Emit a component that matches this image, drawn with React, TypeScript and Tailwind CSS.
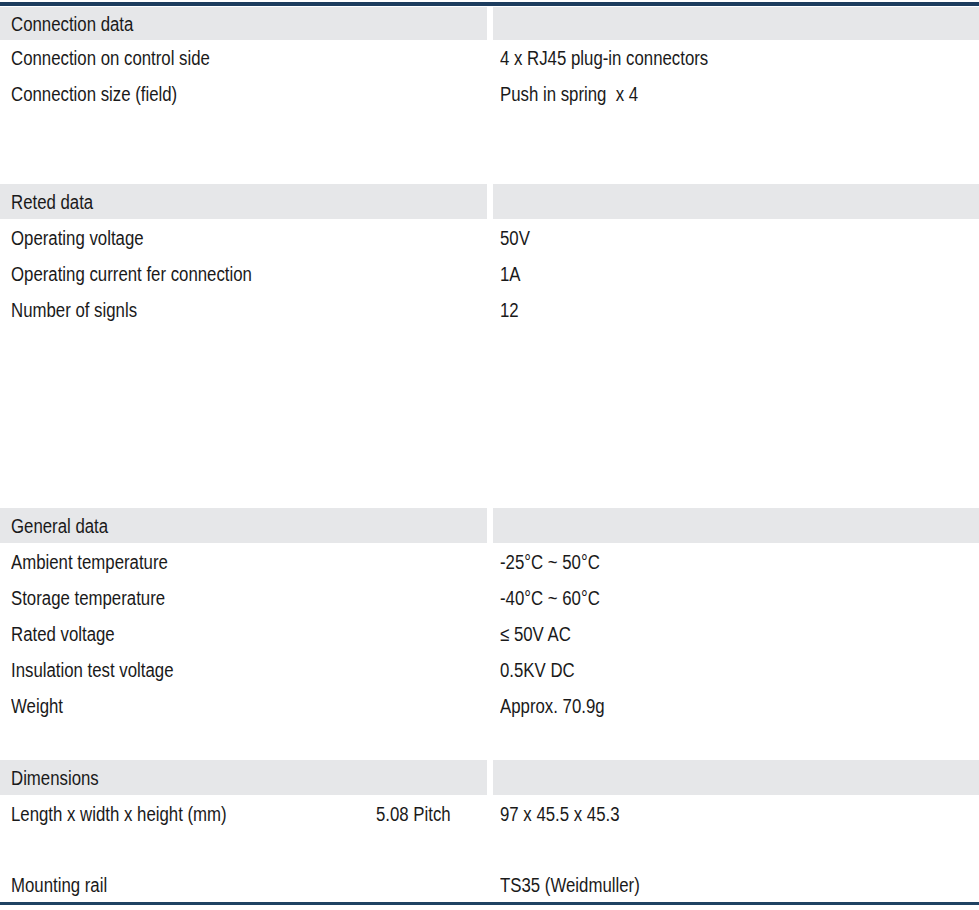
import React from "react";

type Row =
  | { kind: "header"; label: string; first?: boolean }
  | { kind: "data"; label: string; value: string; sub?: string; last?: boolean }
  | { kind: "empty" };

const rows: Row[] = [
  { kind: "header", label: "Connection data", first: true },
  { kind: "data", label: "Connection on control side", value: "4 x RJ45 plug-in connectors" },
  { kind: "data", label: "Connection size (field)", value: "Push in spring  x 4" },
  { kind: "empty" },
  { kind: "empty" },
  { kind: "header", label: "Reted data" },
  { kind: "data", label: "Operating voltage", value: "50V" },
  { kind: "data", label: "Operating current fer connection", value: "1A" },
  { kind: "data", label: "Number of signls", value: "12" },
  { kind: "empty" },
  { kind: "empty" },
  { kind: "empty" },
  { kind: "empty" },
  { kind: "empty" },
  { kind: "header", label: "General data" },
  { kind: "data", label: "Ambient temperature", value: "-25°C ~ 50°C" },
  { kind: "data", label: "Storage temperature", value: "-40°C ~ 60°C" },
  { kind: "data", label: "Rated voltage", value: "≤ 50V AC" },
  { kind: "data", label: "Insulation test voltage", value: "0.5KV DC" },
  { kind: "data", label: "Weight", value: "Approx. 70.9g" },
  { kind: "empty" },
  { kind: "header", label: "Dimensions" },
  { kind: "data", label: "Length x width x height (mm)", sub: "5.08 Pitch", value: "97 x 45.5 x 45.3" },
  { kind: "empty" },
  { kind: "data", label: "Mounting rail", value: "TS35 (Weidmuller)", last: true },
];

// condensed look: Arial-width font squeezed horizontally
function Txt({ children }: { children: React.ReactNode }) {
  return <span className="inline-block whitespace-pre origin-left scale-x-[0.84]">{children}</span>;
}

function SpecRow({ row }: { row: Row }) {
  if (row.kind === "empty") return <div className="h-9" />;

  if (row.kind === "header") {
    return (
      <div className={`flex ${row.first ? "h-[34px] pt-px" : "h-9 pb-px"}`}>
        <div className="w-[487px] bg-[#e6e7e9] pl-[11px] flex items-center">
          <Txt>{row.label}</Txt>
        </div>
        <div className="w-[6px] bg-white" />
        <div className="flex-1 bg-[#e6e7e9]" />
      </div>
    );
  }

  return (
    <div className={`flex items-center ${row.last ? "h-[34px]" : "h-9"}`}>
      <div className="w-[487px] flex items-center">
        <div className="w-[366px] pl-[11px]">
          <Txt>{row.label}</Txt>
        </div>
        {row.sub && (
          <div className="pl-[10px]">
            <Txt>{row.sub}</Txt>
          </div>
        )}
      </div>
      <div className="w-[6px]" />
      <div className="flex-1 pl-[7px]">
        <Txt>{row.value}</Txt>
      </div>
    </div>
  );
}

export default function App() {
  return (
    <div
      className="w-[979px] h-[910px] bg-white pt-[2px] text-[20px] leading-[24px] text-[#1a1a1a] overflow-hidden"
      style={{ fontFamily: '"Liberation Sans", Arial, sans-serif' }}
    >
      <div className="h-[4px] bg-[#1c3c5e]" />
      {rows.map((row, i) => (
        <SpecRow key={i} row={row} />
      ))}
      <div className="h-[3px] bg-[#1f4262]" />
    </div>
  );
}
